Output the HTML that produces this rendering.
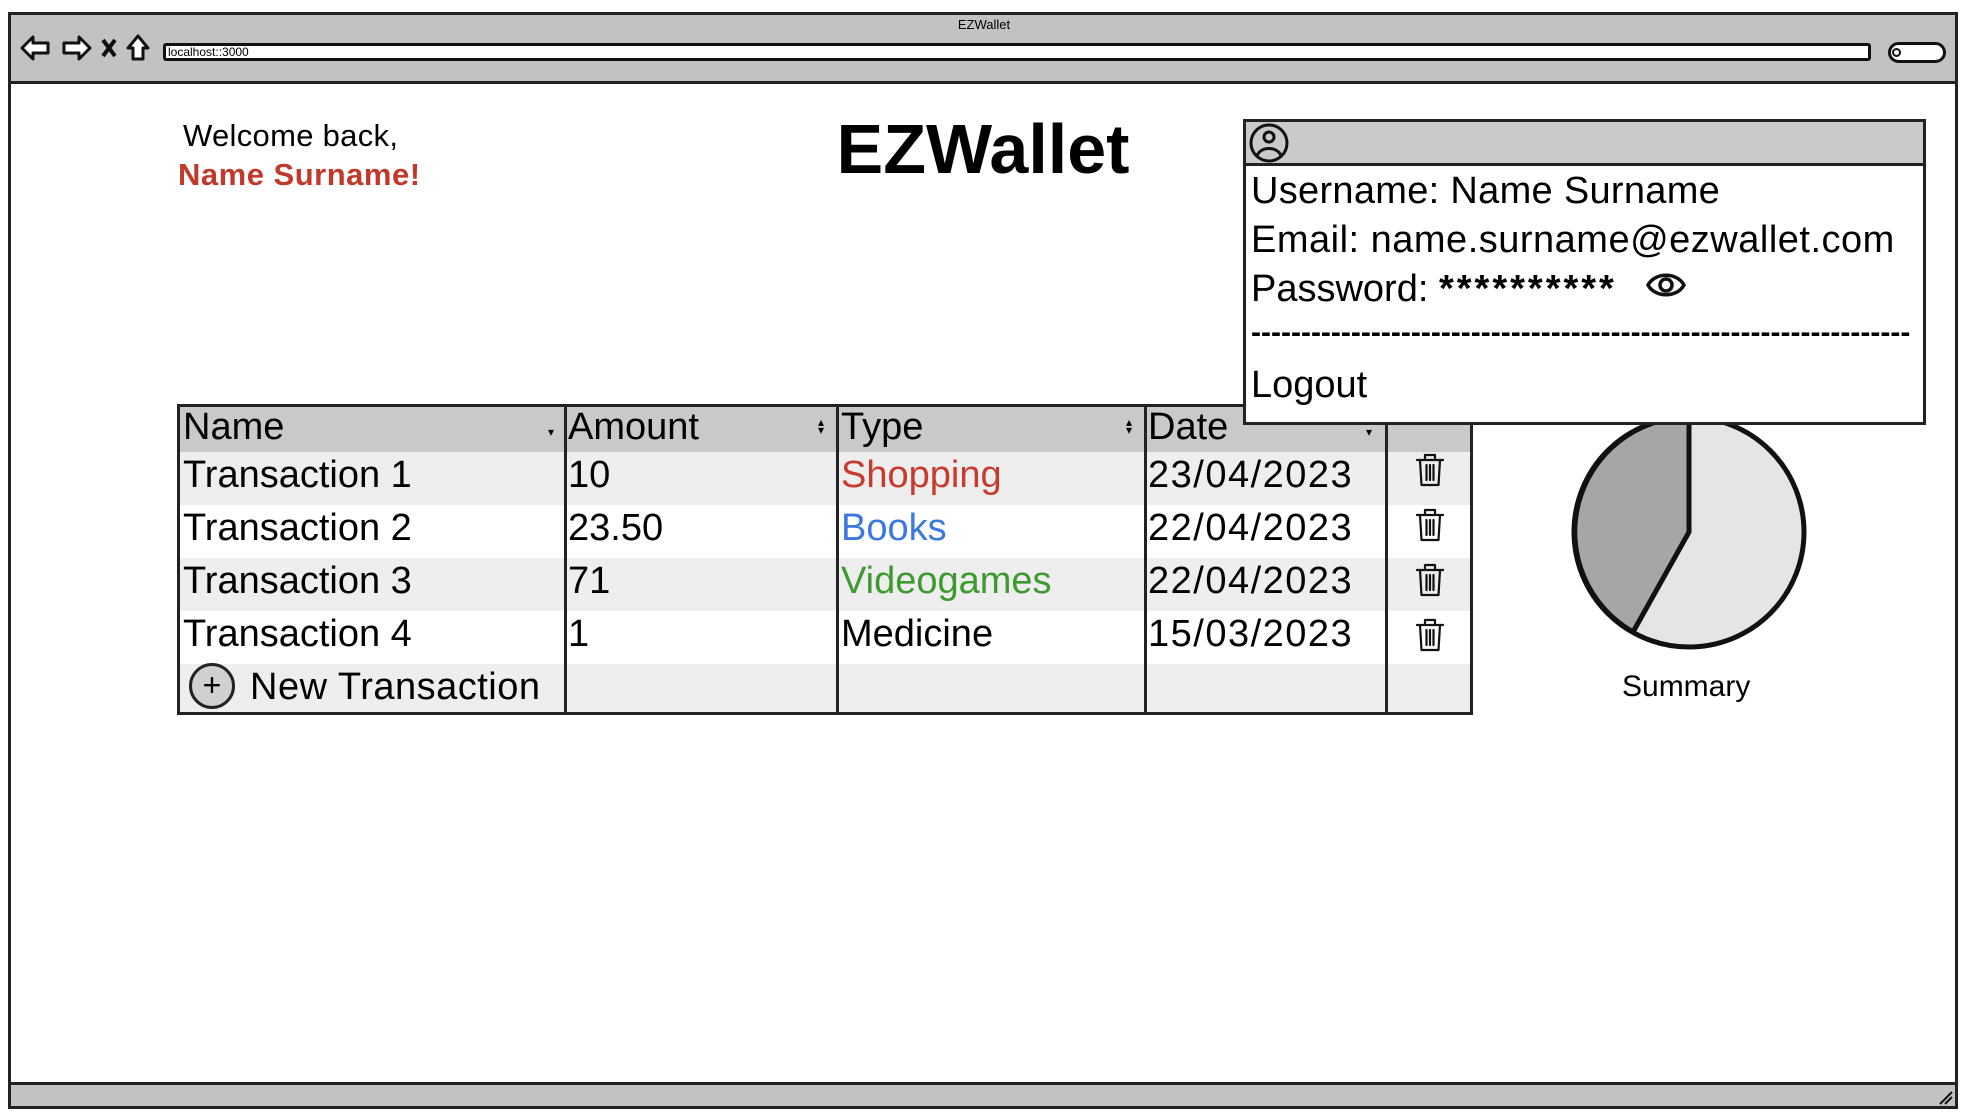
<!DOCTYPE html>
<html><head><meta charset="utf-8"><style>
*{margin:0;padding:0;box-sizing:border-box}
body{width:1968px;height:1116px;background:#fff;font-family:"Liberation Sans",sans-serif;position:relative;overflow:hidden;color:#000}
.a{position:absolute}
.t{position:absolute;white-space:nowrap;line-height:1}
.d{letter-spacing:1.5px}
</style></head><body>
<div class="a" style="left:8px;top:12px;width:1950px;height:1097px;border:3px solid #222;background:#fff"></div>
<div class="a" style="left:8px;top:12px;width:1950px;height:72px;border:3px solid #222;background:#c2c2c2"></div>
<div class="t" style="left:0;width:1968px;text-align:center;top:18px;font-size:13px">EZWallet</div>
<svg class="a" style="left:18px;top:32px" width="140" height="32" viewBox="0 0 140 32" fill="#fff" stroke="#111" stroke-width="3" stroke-linejoin="round">
<path d="M4 16 L15 5 L15 11 L30 11 L30 21 L15 21 L15 27 Z"/>
<path d="M72 16 L61 5 L61 11 L46 11 L46 21 L61 21 L61 27 Z"/>
<path d="M85 8 L97 24 M97 8 L85 24" stroke-width="4"/>
<path d="M120 4 L130 16 L125 16 L125 27 L115 27 L115 16 L110 16 Z"/>
</svg>
<div class="a" style="left:163px;top:43px;width:1708px;height:18px;border:3px solid #111;border-radius:3px;background:#fff"></div>
<div class="t" style="left:168px;top:46px;font-size:12px">localhost::3000</div>
<div class="a" style="left:1888px;top:42px;width:58px;height:21px;border:3px solid #111;border-radius:11px;background:#fff"></div>
<div class="a" style="left:1892px;top:48px;width:9px;height:9px;border:2px solid #111;border-radius:50%"></div>
<div class="a" style="left:8px;top:1082px;width:1950px;height:27px;border:3px solid #222;background:#c2c2c2"></div>
<svg class="a" style="left:1938px;top:1090px" width="16" height="16"><path d="M2 14 L14 2 M7 14 L14 7" stroke="#111" stroke-width="2"/></svg>

<div class="t" style="left:183px;top:120px;font-size:31px;letter-spacing:0.3px">Welcome back,</div>
<div class="t" style="left:178px;top:159px;font-size:31px;font-weight:bold;color:#c0392b;letter-spacing:0.5px">Name Surname!</div>
<div class="t" style="left:0;width:1966px;text-align:center;top:114px;font-size:70px;font-weight:bold">EZWallet</div>

<div class="a" style="left:177px;top:404px;width:1296px;height:311px;border:3px solid #222;background:#fff;overflow:hidden">
 <div class="a" style="left:0;top:0;width:1296px;height:45px;background:#c9c9c9"></div>
 <div class="a" style="left:0;top:45px;width:1296px;height:53px;background:#eee"></div>
 <div class="a" style="left:0;top:151px;width:1296px;height:53px;background:#eee"></div>
 <div class="a" style="left:0;top:257px;width:1296px;height:54px;background:#eee"></div>
</div>
<div class="a" style="left:564px;top:404px;width:3px;height:311px;background:#222"></div>
<div class="a" style="left:836px;top:404px;width:3px;height:311px;background:#222"></div>
<div class="a" style="left:1144px;top:404px;width:3px;height:311px;background:#222"></div>
<div class="a" style="left:1385px;top:404px;width:3px;height:311px;background:#222"></div>

<div style="font-size:38px">
<div class="t" style="left:183px;top:408px">Name</div>
<div class="t" style="left:568px;top:408px">Amount</div>
<div class="t" style="left:841px;top:408px">Type</div>
<div class="t" style="left:1148px;top:408px">Date</div>
<div class="t" style="left:548px;top:426px;font-size:12px">▾</div>
<div class="t" style="left:818px;top:418px;font-size:12px;line-height:8px">▴<br>▾</div>
<div class="t" style="left:1126px;top:418px;font-size:12px;line-height:8px">▴<br>▾</div>
<div class="t" style="left:1366px;top:426px;font-size:12px">▾</div>

<div class="t" style="left:183px;top:456px">Transaction 1</div>
<div class="t" style="left:568px;top:456px">10</div>
<div class="t" style="left:841px;top:456px;color:#c9392e">Shopping</div>
<div class="t d" style="left:1148px;top:456px">23/04/2023</div>

<div class="t" style="left:183px;top:509px">Transaction 2</div>
<div class="t" style="left:568px;top:509px">23.50</div>
<div class="t" style="left:841px;top:509px;color:#3b78e0">Books</div>
<div class="t d" style="left:1148px;top:509px">22/04/2023</div>

<div class="t" style="left:183px;top:562px">Transaction 3</div>
<div class="t" style="left:568px;top:562px">71</div>
<div class="t" style="left:841px;top:562px;color:#3d9a2f">Videogames</div>
<div class="t d" style="left:1148px;top:562px">22/04/2023</div>

<div class="t" style="left:183px;top:615px">Transaction 4</div>
<div class="t" style="left:568px;top:615px">1</div>
<div class="t" style="left:841px;top:615px">Medicine</div>
<div class="t d" style="left:1148px;top:615px">15/03/2023</div>

<div class="t" style="left:250px;top:668px;letter-spacing:0.5px">New Transaction</div>
</div>
<div class="a" style="left:189px;top:663px;width:46px;height:46px;border:3px solid #222;border-radius:50%;background:#d0d0d0"></div>
<div class="t" style="left:189px;top:669px;width:46px;text-align:center;font-size:32px">+</div>

<svg class="a" style="left:1414px;top:452px" width="32" height="250" viewBox="0 0 32 250">
<g fill="none" stroke="#111" stroke-width="2.2" stroke-linejoin="round" stroke-linecap="round">
<g id="tr"><path d="M3 8 H29 M11 8 V3 H21 V8 M6 8 L7.5 33 H24.5 L26 8 M12.5 13 V28 M16 13 V28 M19.5 13 V28"/></g>
<use href="#tr" y="55"/><use href="#tr" y="110"/><use href="#tr" y="165"/>
</g>
</svg>

<svg class="a" style="left:1570px;top:410px" width="240" height="240" viewBox="0 0 240 240">
<circle cx="119" cy="122" r="115" fill="#e5e5e5" stroke="#111" stroke-width="5"/>
<path d="M119 122 L119 7 A115 115 0 0 0 63 222 Z" fill="#a6a6a6" stroke="#111" stroke-width="5" stroke-linejoin="round"/>
</svg>
<div class="t" style="left:1622px;top:672px;font-size:30px">Summary</div>

<div class="a" style="left:1243px;top:119px;width:683px;height:306px;border:3px solid #222;background:#fff"></div>
<div class="a" style="left:1243px;top:119px;width:683px;height:47px;border:3px solid #222;background:#cacaca"></div>
<svg class="a" style="left:1248px;top:122px" width="42" height="42" viewBox="0 0 42 42" fill="none" stroke="#111" stroke-width="3">
<circle cx="21" cy="21" r="18"/><circle cx="21" cy="15" r="5"/><path d="M9 34 C12 24 30 24 33 34"/>
</svg>
<div style="font-size:38px">
<div class="t" style="left:1251px;top:172px;letter-spacing:0.3px">Username: Name Surname</div>
<div class="t" style="left:1251px;top:221px;letter-spacing:0.5px">Email: name.surname@ezwallet.com</div>
<div class="t" style="left:1251px;top:270px">Password: <span style="letter-spacing:3px;font-weight:bold">**********</span></div>
<div class="t" style="left:1251px;top:318px;font-size:30px;font-weight:bold;overflow:hidden;width:668px">------------------------------------------------------------------</div>
<div class="t" style="left:1251px;top:366px">Logout</div>
</div>
<svg class="a" style="left:1645px;top:268px" width="42" height="34" viewBox="0 0 42 34" fill="none" stroke="#111" stroke-width="3.5">
<path d="M3 17 C10 4 32 4 39 17 C32 30 10 30 3 17 Z"/><circle cx="21" cy="17" r="6"/>
</svg>
</body></html>
